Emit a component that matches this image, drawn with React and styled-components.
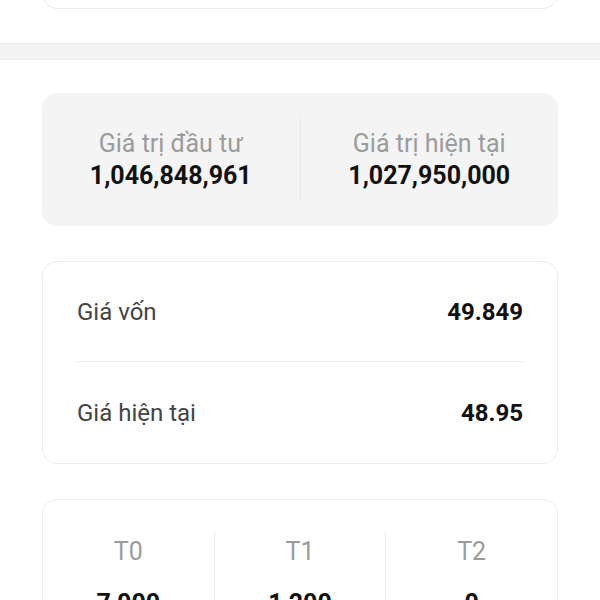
import React from "react";
import styled, { createGlobalStyle } from "styled-components";

const Global = createGlobalStyle`
  html, body { margin: 0; padding: 0; background: #ffffff; }
  body { font-family: Roboto, "Noto Sans", "Liberation Sans", sans-serif; overflow: hidden; }
`;

const Page = styled.div`
  display: flex;
  flex-direction: column;
  width: 600px;
  background: #fff;
  & > * { flex-shrink: 0; }
`;

const Section = styled.div`
  display: flex;
  flex-direction: column;
  gap: 35px;
  padding: 0 42px;
  & > * { flex-shrink: 0; }
`;

const Card = styled.div`
  box-sizing: border-box;
  border: 1px solid #ececec;
  border-radius: 15px;
  background: #fff;
`;

const ClippedCard = styled(Card)`
  height: 52px;
  margin-top: -43px;
`;

const Band = styled.div`
  box-sizing: border-box;
  height: 17px;
  margin: 34px 0 33px;
  background: #f3f3f3;
  border-top: 1px solid #e6e6e6;
  border-bottom: 1px solid #eeeeee;
`;

const SummaryCard = styled.div`
  display: grid;
  grid-template-columns: 1fr 1px 1fr;
  align-items: center;
  height: 133px;
  box-sizing: border-box;
  border-radius: 15px;
  background: #f4f4f4;
`;

const VDivider = styled.div`
  width: 1px;
  height: ${(p) => p.$h}px;
  background: ${(p) => p.$c || "#e8e8e8"};
  align-self: ${(p) => p.$align || "center"};
`;

const Stat = styled.div`
  display: flex;
  flex-direction: column;
  align-items: center;
`;

const StatLabel = styled.div`
  font-size: 25px;
  line-height: 32px;
  color: #9b9b9b;
`;

const StatValue = styled.div`
  font-size: 25px;
  line-height: 32px;
  font-weight: 700;
  color: #111;
`;

const RowCard = styled(Card)`
  padding: 0 34px;
`;

const Row = styled.div`
  display: flex;
  align-items: center;
  justify-content: space-between;
  box-sizing: border-box;
  height: ${(p) => (p.$first ? 99 : 102)}px;
  padding-top: 1px;
  border-top: ${(p) => (p.$first ? "none" : "1px solid #ebebeb")};
`;

const RowLabel = styled.span`
  font-size: 24px;
  color: #444;
`;

const RowValue = styled.span`
  font-size: 24px;
  font-weight: 700;
  color: #111;
`;

const SessionCard = styled(Card)`
  display: grid;
  grid-template-columns: 1fr 1px 1fr 1px 1fr;
  padding-top: 32px;
  height: 140px;
`;

const Session = styled.div`
  display: flex;
  flex-direction: column;
  align-items: center;
  gap: 14px;
  padding-top: 1px;
`;

const SessionLabel = styled.div`
  font-size: 25px;
  line-height: 38px;
  color: #9b9b9b;
`;

const SessionValue = styled.div`
  font-size: 25px;
  line-height: 38px;
  font-weight: 700;
  color: #111;
`;

export default function App() {
  const sessions = [
    { label: "T0", value: "7,000" },
    { label: "T1", value: "1,200" },
    { label: "T2", value: "0" },
  ];
  return (
    <Page>
      <Global />
      <Section>
        <ClippedCard />
      </Section>
      <Band />
      <Section>
        <SummaryCard>
          <Stat>
            <StatLabel>Giá trị đầu tư</StatLabel>
            <StatValue>1,046,848,961</StatValue>
          </Stat>
          <VDivider $h={83} />
          <Stat>
            <StatLabel>Giá trị hiện tại</StatLabel>
            <StatValue>1,027,950,000</StatValue>
          </Stat>
        </SummaryCard>
        <RowCard>
          <Row $first>
            <RowLabel>Giá vốn</RowLabel>
            <RowValue>49.849</RowValue>
          </Row>
          <Row>
            <RowLabel>Giá hiện tại</RowLabel>
            <RowValue>48.95</RowValue>
          </Row>
        </RowCard>
        <SessionCard>
          {sessions.map((s, i) => (
            <React.Fragment key={s.label}>
              {i > 0 && <VDivider $h={120} $align="start" $c="#ececec" />}
              <Session>
                <SessionLabel>{s.label}</SessionLabel>
                <SessionValue>{s.value}</SessionValue>
              </Session>
            </React.Fragment>
          ))}
        </SessionCard>
      </Section>
    </Page>
  );
}
